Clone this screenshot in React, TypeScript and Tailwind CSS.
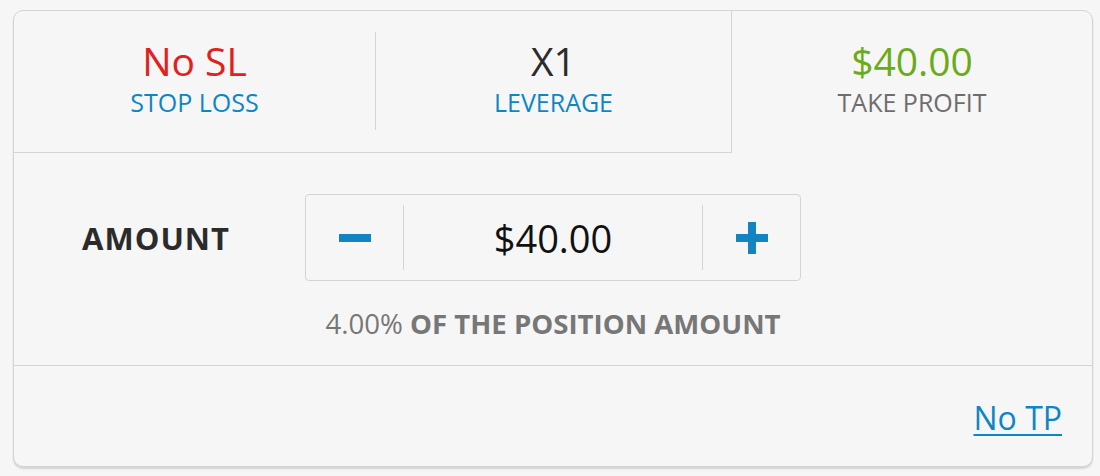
import React from "react";

export default function App() {
  const font = { fontFamily: '"Open Sans", "Noto Sans", sans-serif' };
  return (
    <div
      className="w-[1100px] h-[476px] bg-[#f6f6f6] pt-[10px] pl-[13px]"
      style={font}
    >
      <div className="w-[1080px] h-[457px] rounded-[10px] border border-[#d4d4d4] bg-[#f6f6f6] shadow-[0_2px_2px_rgba(0,0,0,0.14)] flex flex-col overflow-hidden">
        {/* Tabs */}
        <div className="flex h-[142px] shrink-0">
          <div className="w-[362px] flex border-b border-[#d4d4d4]">
            <div className="flex-1 flex flex-col items-center pt-[30px]">
              <div className="text-[39px] leading-[40px] text-[#e2201c]">No SL</div>
              <div className="mt-[7px] text-[25px] leading-[28px] text-[#0c86c4]">STOP LOSS</div>
            </div>
            <div className="w-px h-[98px] mt-[21px] bg-[#d4d4d4]" />
          </div>
          <div className="w-[356px] flex flex-col items-center pt-[30px] border-b border-r border-[#d4d4d4]">
            <div className="text-[39px] leading-[40px] text-[#2b2b2b]">X1</div>
            <div className="mt-[7px] text-[25px] leading-[28px] text-[#0c86c4]">LEVERAGE</div>
          </div>
          <div className="flex-1 flex flex-col items-center pt-[30px]">
            <div className="text-[39px] leading-[40px] text-[#6aab18]">$40.00</div>
            <div className="mt-[7px] text-[25px] leading-[28px] text-[#6d6d6d]">TAKE PROFIT</div>
          </div>
        </div>

        {/* Amount section */}
        <div className="h-[213px] shrink-0 border-b border-[#d4d4d4] flex flex-col pt-[41px]">
          <div className="grid grid-cols-[1fr_496px_1fr] items-center h-[87px]">
            <div className="flex justify-end pr-[75px]">
              <span className="text-[31px] leading-[36px] font-bold tracking-[1px] text-[#2b2b2b]">AMOUNT</span>
            </div>
            <div className="h-[87px] rounded-[4px] border border-[#d4d4d4] flex items-center">
              <button className="w-[97px] h-full flex items-center justify-center">
                <span className="block w-[32px] h-[8px] bg-[#1384c2]" />
              </button>
              <div className="w-px h-[65px] bg-[#d4d4d4]" />
              <div className="flex-1 text-center text-[38px] leading-[40px] text-[#111]">$40.00</div>
              <div className="w-px h-[65px] bg-[#d4d4d4]" />
              <button className="w-[97px] h-full flex items-center justify-center">
                <span className="relative block w-[32px] h-[32px]">
                  <span className="absolute left-0 top-[12px] w-[32px] h-[8px] bg-[#1384c2]" />
                  <span className="absolute top-0 left-[12px] w-[8px] h-[32px] bg-[#1384c2]" />
                </span>
              </button>
            </div>
            <div />
          </div>
          <div className="mt-[27px] text-center text-[27.6px] leading-[30px] text-[#777777]">
            4.00% <span className="font-bold">OF THE POSITION AMOUNT</span>
          </div>
        </div>

        {/* Bottom */}
        <div className="flex-1 flex justify-end items-start pt-[35px] pr-[30px]">
          <a
            href="#"
            className="text-[32px] leading-[34px] text-[#0c86c4] underline decoration-2 underline-offset-[4px]"
          >
            No TP
          </a>
        </div>
      </div>
    </div>
  );
}
